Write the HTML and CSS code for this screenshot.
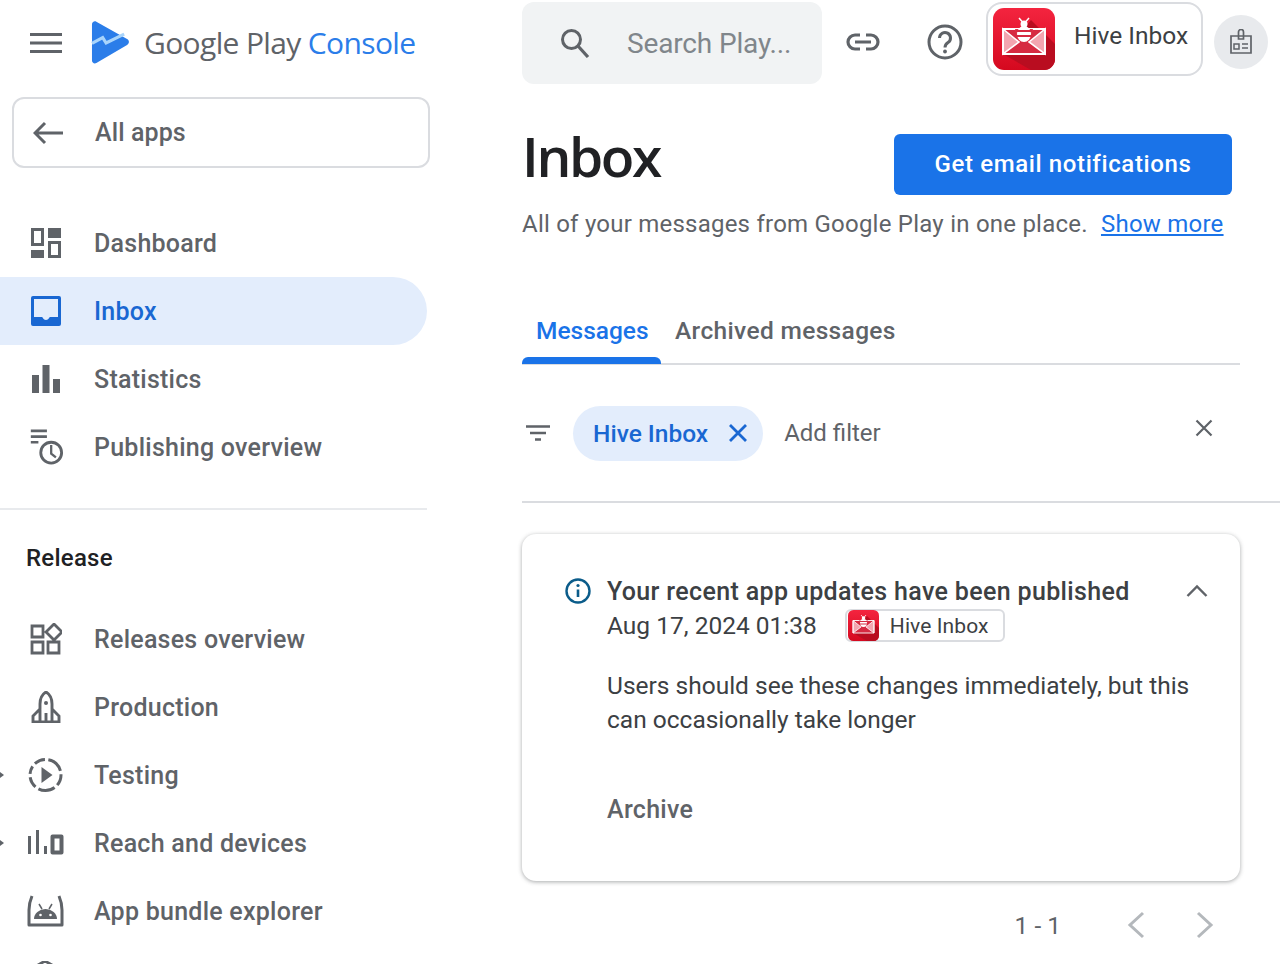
FILE: index.html
```html
<!DOCTYPE html>
<html>
<head>
  <meta charset="utf-8">
  <title>Inbox - Google Play Console</title>
  <link rel="stylesheet" href="styles.css">
</head>
<body>

<svg class="defs" width="0" height="0">
  <defs>
    <linearGradient id="redBg" x1="0" y1="0" x2="0" y2="1">
      <stop offset="0" stop-color="#f4243f"/>
      <stop offset="1" stop-color="#d5091f"/>
    </linearGradient>
    <symbol id="appIcon" viewBox="0 0 62 62">
      <rect width="62" height="62" rx="11" fill="url(#redBg)"/>
      <path d="M38 12L62 36V51a11 11 0 0 1-11 11H38L10 46z" fill="#b90d20"/>
      <path d="M10 21H52V46H10z" fill="#d62a41"/>
      <path d="M10 21L26 34L10 46zM52 21L36 34L52 46z" fill="#f3a5b0" stroke="#fff" stroke-width="1.600"/>
      <path d="M10 21H52V46H10z" fill="none" stroke="#fff" stroke-width="1.800"/>
      <path d="M22 21h18l-3 11q-6 4-12 0z" fill="#e2354b"/>
      <ellipse cx="31" cy="26" rx="7" ry="8" fill="#fff"/>
      <circle cx="31" cy="16" r="3.500" fill="#fff"/>
      <path d="M26 10l3.500 4M36 10l-3.500 4" stroke="#fff" stroke-width="1.500" fill="none"/>
      <path d="M23 23h16M23 28h16" stroke="#d62a41" stroke-width="2"/>
    </symbol>
  </defs>
</svg>

<div class="page">

  <!-- sidebar -->
  <aside class="sidebar">
    <div class="brand">
      <svg class="menu-icon" viewBox="0 0 32 20"><path d="M0 1.500H32M0 10H32M0 18.500H32" stroke="#5f6368" stroke-width="3"/></svg>
      <svg class="play-logo" viewBox="0 0 40 44">
        <path d="M1 3.500C1 1 3.500-.5 5.500.7L37 18.500c2.500 1.500 2.500 4.500 0 6L5.500 43c-2 1.200-4.500-.2-4.500-2.500z" fill="#2b7de9"/>
        <path d="M1 23l11-6 3.500 5.500L34 13.500" fill="none" stroke="#a8d4fb" stroke-width="3.200"/>
      </svg>
      <span class="brand-name">Google Play <span class="brand-blue">Console</span></span>
    </div>

    <a class="all-apps">
      <svg viewBox="0 0 30 24"><path d="M30 12H3M12 2L2 12l10 10" fill="none" stroke="#5f6368" stroke-width="3"/></svg>
      <span>All apps</span>
    </a>

    <nav class="nav nav-top">
      <a class="nav-item">
        <svg viewBox="0 0 32 32"><path d="M1 1h13v18H1zM4 4v12h7V4zM18 1h13v10H18zM1 23h13v8H1zM18 14h13v17H18zM21 17v11h7V17z" fill="#5f6368" fill-rule="evenodd"/></svg>
        Dashboard
      </a>
      <a class="nav-item active">
        <svg viewBox="0 0 32 32"><path d="M3 1h26a2 2 0 0 1 2 2v26a2 2 0 0 1-2 2H3a2 2 0 0 1-2-2V3a2 2 0 0 1 2-2zm1 3v18h8c1 0 1 3 4 3s3-3 4-3h8V4z" fill="#1967d2" fill-rule="evenodd"/></svg>
        Inbox
      </a>
      <a class="nav-item">
        <svg viewBox="0 0 32 32"><path d="M2 12h7v18H2zM12.500 2h7v28h-7zM23 16h7v14h-7z" fill="#5f6368"/></svg>
        Statistics
      </a>
      <a class="nav-item">
        <svg class="tall" viewBox="0 0 37 38"><path d="M3 2h17M3 8h17M3 14h8" stroke="#5f6368" stroke-width="2.800" fill="none"/><circle cx="24.500" cy="25" r="11" fill="#fff" stroke="#5f6368" stroke-width="3"/><path d="M24.500 17v9l5 4" fill="none" stroke="#5f6368" stroke-width="2.400"/></svg>
        Publishing overview
      </a>
    </nav>

    <div class="nav-rule"></div>
    <div class="nav-title">Release</div>

    <nav class="nav">
      <a class="nav-item">
        <svg viewBox="0 0 32 32"><path d="M2 3h11v11H2zM2 19h11v11H2zM18 19h11v11H18zM24 1l8 8-8 8-8-8z" fill="none" stroke="#5f6368" stroke-width="2.800"/></svg>
        Releases overview
      </a>
      <a class="nav-item">
        <svg viewBox="0 0 32 32"><path d="M16 1c5 3 6 8 6 12v5l7 7v6H3v-6l7-7v-5c0-4 1-9 6-12zM10 18v13M22 18v13M16 22v9" fill="none" stroke="#5f6368" stroke-width="2.900"/><circle cx="16" cy="12" r="2" fill="#5f6368"/></svg>
        Production
      </a>
      <a class="nav-item has-arrow">
        <svg class="tall" viewBox="0 0 36 36"><circle cx="18" cy="18" r="15.500" fill="none" stroke="#5f6368" stroke-width="3" stroke-dasharray="11 3.500 17 3.500 11 3.500 8 3.500"/><path d="M14 10l11 8-11 8z" fill="#5f6368"/></svg>
        Testing
      </a>
      <a class="nav-item has-arrow">
        <svg class="tall" viewBox="0 0 37 36"><path d="M1 11h3v18H1zM9 5h3v24H9zM17 21h3v8h-3z" fill="#5f6368"/><path d="M25.500 11.500h9v16h-9z" fill="none" stroke="#5f6368" stroke-width="4" stroke-linejoin="round"/></svg>
        Reach and devices
      </a>
      <a class="nav-item">
        <svg class="tall" viewBox="0 0 37 36"><path d="M5 3Q2 10 2 17V32H35V17Q35 10 32 3" fill="none" stroke="#5f6368" stroke-width="3" stroke-linejoin="round"/><path d="M7 26a11.500 10 0 0 1 23 0z" fill="#5f6368"/><path d="M12 11l3 5M25 11l-3 5" stroke="#5f6368" stroke-width="1.500"/><circle cx="13.500" cy="22" r="1.300" fill="#fff"/><circle cx="23.500" cy="22" r="1.300" fill="#fff"/></svg>
        App bundle explorer
      </a>
      <a class="nav-item">
        <svg class="tall" viewBox="0 0 37 36"><path d="M18 0L4 8l14 8 14-8z" fill="none" stroke="#5f6368" stroke-width="2.800"/></svg>
      </a>
    </nav>
  </aside>

  <!-- main column -->
  <main class="main">
    <header class="topbar">
      <div class="search">
        <svg viewBox="0 0 30 30"><circle cx="11.500" cy="11.500" r="9" fill="none" stroke="#5f6368" stroke-width="3"/><path d="M18 18l10 11" stroke="#5f6368" stroke-width="3.200"/></svg>
        <span>Search Play...</span>
      </div>
      <svg class="link-icon" viewBox="0 0 34 18"><path d="M14 2H9a7 7 0 0 0 0 14h5M20 2h5a7 7 0 0 1 0 14h-5M9 9h16" fill="none" stroke="#5f6368" stroke-width="3.200"/></svg>
      <svg class="help-icon" viewBox="0 0 36 36"><circle cx="18" cy="18" r="16" fill="none" stroke="#5f6368" stroke-width="3"/><path d="M12.500 14a5.500 5.500 0 1 1 8.500 4.600c-2 1.400-3 2.400-3 4.900" fill="none" stroke="#5f6368" stroke-width="3"/><circle cx="18" cy="27.500" r="1.900" fill="#5f6368"/></svg>
      <div class="app-switch">
        <svg class="app-icon"><use href="#appIcon"/></svg>
        <span>Hive Inbox</span>
      </div>
      <div class="avatar">
        <svg viewBox="0 0 24 26"><path d="M2 7h20v17H2zM9.500 7V3a2.500 2.500 0 0 1 5 0v7h-5z" fill="#e8eaed" stroke="#5f6368" stroke-width="1.700"/><path d="M5 15h5v5H5zM13 15h6M13 19h6" stroke="#5f6368" stroke-width="1.500" fill="none"/></svg>
      </div>
    </header>

    <div class="title-row">
      <h1>Inbox</h1>
      <button class="primary">Get email notifications</button>
    </div>
    <p class="subtitle">All of your messages from Google Play in one place. <a>Show more</a></p>

    <div class="tabs">
      <a class="tab active">Messages</a>
      <a class="tab">Archived messages</a>
    </div>

    <div class="filters">
      <svg class="filter-icon" viewBox="0 0 24 16"><path d="M0 1.500H24M4 8H20M9 14.500H15" stroke="#5f6368" stroke-width="2.400"/></svg>
      <div class="chip">
        Hive Inbox
        <svg viewBox="0 0 20 20"><path d="M2 2l16 16M18 2L2 18" stroke="#1967d2" stroke-width="2.800"/></svg>
      </div>
      <span class="add-filter">Add filter</span>
      <svg class="clear-icon" viewBox="0 0 18 18"><path d="M1.500 1.500l15 15M16.500 1.500l-15 15" stroke="#5f6368" stroke-width="2.200"/></svg>
    </div>

    <section class="card">
      <div class="card-head">
        <svg class="info-icon" viewBox="0 0 26 26"><circle cx="13" cy="13" r="11.500" fill="none" stroke="#0b5c8a" stroke-width="2.400"/><path d="M13 11.500v7.500" stroke="#0b5c8a" stroke-width="2.600"/><circle cx="13" cy="7.500" r="1.600" fill="#0b5c8a"/></svg>
        <div class="card-titles">
          <h2>Your recent app updates have been published</h2>
          <div class="card-meta">
            <span>Aug 17, 2024 01:38</span>
            <div class="app-tag">
              <svg class="tag-icon"><use href="#appIcon"/></svg>
              <span>Hive Inbox</span>
            </div>
          </div>
        </div>
        <svg class="chevron" viewBox="0 0 22 14"><path d="M1.500 12L11 2.500 20.500 12" fill="none" stroke="#5f6368" stroke-width="2.400"/></svg>
      </div>
      <p class="card-body">Users should see these changes immediately, but this can occasionally take longer</p>
      <a class="archive">Archive</a>
    </section>

    <div class="pager">
      <span>1 - 1</span>
      <svg viewBox="0 0 18 28"><path d="M16 2L3 14l13 12" fill="none" stroke="#b4b8bc" stroke-width="3"/></svg>
      <svg viewBox="0 0 18 28"><path d="M2 2l13 12L2 26" fill="none" stroke="#b4b8bc" stroke-width="3"/></svg>
    </div>
  </main>
</div>

</body>
</html>
```

FILE: styles.css
```css
/* page frame */
html, body {
  margin: 0;
  height: 964px;
  overflow: hidden;
  background: #fff;
}

body {
  font-family: Roboto, "Liberation Sans", sans-serif;
  color: #3c4043;
}

a {
  display: block;
}

.defs {
  display: block;
  height: 0;
}

.page {
  display: flex;
  height: 964px;
  overflow: hidden;
}

/* sidebar */
.sidebar {
  width: 427px;
  flex: none;
}

.brand {
  display: flex;
  align-items: center;
  height: 86px;
  padding-left: 30px;
}

.menu-icon {
  width: 32px;
  height: 20px;
  margin-right: 29px;
}

.play-logo {
  width: 39px;
  height: 43px;
  margin-top: -2px;
  margin-right: 14px;
}

.brand-name {
  margin-top: -2px;
  font-family: "Open Sans", sans-serif;
  font-size: 30px;
  font-weight: 500;
  letter-spacing: -0.64px;
  color: #5f6368;
  white-space: nowrap;
}

.brand-blue {
  color: #2b7de9;
}

.all-apps {
  display: flex;
  align-items: center;
  box-sizing: border-box;
  width: 418px;
  height: 71px;
  margin: 11px 0 0 12px;
  padding-left: 19px;
  border: 2px solid #dadce0;
  border-radius: 12px;
  font-size: 25px;
  font-weight: 500;
  letter-spacing: 0.1px;
  color: #5f6368;
}

.all-apps svg {
  width: 30px;
  height: 24px;
  margin-right: 32px;
}

.nav-top {
  margin-top: 41px;
}

.nav-item {
  position: relative;
  display: flex;
  align-items: center;
  height: 68px;
  padding-left: 30px;
  font-size: 25px;
  font-weight: 500;
  letter-spacing: 0.25px;
  color: #5f6368;
  white-space: nowrap;
}

.nav-item svg {
  width: 32px;
  height: 32px;
  margin-right: 32px;
}

.nav-item svg.tall {
  width: 37px;
  height: 36px;
  margin-left: -3px;
  margin-right: 30px;
}

.nav-item.active {
  background: #e3edfc;
  color: #1967d2;
  border-radius: 0 34px 34px 0;
}

/* little expander arrow at the sidebar edge */
.nav-item.has-arrow::before {
  content: "";
  position: absolute;
  left: 0;
  top: 31px;
  border-left: 4px solid #5f6368;
  border-top: 3px solid transparent;
  border-bottom: 3px solid transparent;
}

.nav-rule {
  height: 2px;
  margin-top: 27px;
  background: #e8eaed;
}

.nav-title {
  margin: 32px 0 31px 26px;
  font-size: 24px;
  font-weight: 500;
  line-height: 32px;
  letter-spacing: 0.25px;
  color: #202124;
}

/* main column */
.main {
  flex: 1;
  min-width: 0;
  padding-left: 95px;
}

.topbar {
  display: flex;
  align-items: center;
  height: 84px;
}

.search {
  display: flex;
  align-items: center;
  box-sizing: border-box;
  width: 300px;
  height: 82px;
  margin-top: 1px;
  padding-left: 38px;
  background: #f1f3f4;
  border-radius: 12px;
  font-size: 28px;
  color: #80868b;
}

.search span {
  padding-top: 2px;
  letter-spacing: -0.15px;
}

.search svg {
  width: 30px;
  height: 30px;
  margin-right: 37px;
  flex: none;
}

.link-icon {
  width: 34px;
  height: 18px;
  margin-left: 24px;
}

.help-icon {
  width: 36px;
  height: 36px;
  margin-left: 47px;
}

.app-switch {
  display: flex;
  align-items: center;
  box-sizing: border-box;
  width: 217px;
  height: 74px;
  margin-left: 23px;
  margin-top: -6px;
  padding-left: 5px;
  border: 2px solid #dadce0;
  border-radius: 16px;
  font-size: 25px;
  color: #3c4043;
}

.app-switch span {
  margin-bottom: 8px;
  margin-left: -1px;
  font-size: 24.5px;
}

.app-icon {
  width: 62px;
  height: 62px;
  margin-right: 20px;
}

.avatar {
  display: flex;
  align-items: center;
  justify-content: center;
  width: 54px;
  height: 54px;
  margin-left: 11px;
  border-radius: 50%;
  background: #e8eaed;
}

.avatar svg {
  width: 24px;
  height: 26px;
}

.title-row {
  display: flex;
  align-items: flex-start;
  justify-content: space-between;
  width: 710px;
  margin-top: 42px;
}

h1 {
  margin: -2px 0 2px;
  font-family: "Open Sans", sans-serif;
  font-size: 55px;
  font-weight: 600;
  line-height: 64px;
  letter-spacing: -2.4px;
  color: #202124;
}

.primary {
  width: 338px;
  height: 61px;
  margin-top: 8px;
  padding-bottom: 2px;
  border: 0;
  border-radius: 6px;
  background: #1a73e8;
  color: #fff;
  font-family: Roboto, sans-serif;
  font-size: 24px;
  font-weight: 500;
  letter-spacing: 0.62px;
}

.subtitle {
  margin: 11px 0 0;
  font-size: 24px;
  line-height: 36px;
  letter-spacing: 0.23px;
  color: #5f6368;
}

.subtitle a {
  display: inline;
  margin-left: 7px;
  color: #1a73e8;
  text-decoration: underline;
}

.tabs {
  display: flex;
  width: 718px;
  height: 78px;
  margin-top: 45px;
  border-bottom: 2px solid #dadce0;
  box-sizing: border-box;
}

.tab {
  position: relative;
  padding: 29px 14px 0;
  font-size: 24.5px;
  font-weight: 500;
  letter-spacing: 0.35px;
  color: #5f6368;
}

.tab.active {
  width: 111px;
  letter-spacing: 0;
  color: #1a73e8;
}

.tab.active::after {
  content: "";
  position: absolute;
  left: 0;
  right: 0;
  bottom: -1px;
  height: 7px;
  background: #1a73e8;
  border-radius: 6px 6px 0 0;
}

.filters {
  display: flex;
  align-items: center;
  height: 138px;
  border-bottom: 2px solid #dadce0;
  box-sizing: border-box;
  position: relative;
}

.filter-icon {
  width: 24px;
  height: 16px;
  margin-left: 4px;
  margin-right: 23px;
}

.chip {
  display: flex;
  align-items: center;
  gap: 20px;
  height: 55px;
  padding: 0 15px 0 20px;
  border-radius: 28px;
  background: #e3edfc;
  color: #1967d2;
  font-size: 24.5px;
  font-weight: 500;
}

.chip svg {
  width: 20px;
  height: 20px;
}

.add-filter {
  margin-left: 21px;
  font-size: 24px;
  color: #5f6368;
}

.clear-icon {
  width: 18px;
  height: 18px;
  margin-left: 314px;
  margin-top: -10px;
}

.card {
  box-sizing: border-box;
  width: 718px;
  height: 347px;
  margin-top: 31px;
  padding: 39px 32px 0 43px;
  border-radius: 14px;
  box-shadow: 0 1px 4px rgba(60, 64, 67, 0.45);
}

.card-head {
  display: flex;
  align-items: flex-start;
}

.info-icon {
  width: 26px;
  height: 26px;
  flex: none;
  margin-top: 5px;
  margin-right: 16px;
}

.card-titles {
  flex: 1;
}

h2 {
  margin: 1px 0 -1px;
  font-size: 25px;
  font-weight: 500;
  line-height: 36px;
  letter-spacing: 0.35px;
  color: #3c4043;
}

.card-meta {
  display: flex;
  align-items: center;
  height: 33px;
  font-size: 24.5px;
  color: #3c4043;
}

.app-tag {
  display: flex;
  align-items: center;
  box-sizing: border-box;
  width: 160px;
  height: 33px;
  margin-left: 28px;
  padding-left: 1px;
  border: 2px solid #dadce0;
  border-radius: 6px;
  font-size: 21px;
  letter-spacing: 0.1px;
  color: #3c4043;
}

.tag-icon {
  width: 31px;
  height: 31px;
  margin-right: 11px;
}

.chevron {
  width: 22px;
  height: 14px;
  margin-top: 11px;
}

.card-body {
  width: 600px;
  margin: 27px 0 0 42px;
  font-size: 24.5px;
  line-height: 34px;
  color: #3c4043;
}

.archive {
  margin: 58px 0 0 42px;
  font-size: 25px;
  font-weight: 500;
  letter-spacing: 0.3px;
  color: #5f6368;
}

.pager {
  display: flex;
  align-items: center;
  width: 718px;
  height: 28px;
  margin-top: 30px;
  justify-content: flex-end;
  font-size: 24.5px;
  color: #5f6368;
}

.pager span {
  margin-right: 66px;
}

.pager svg {
  width: 18px;
  height: 28px;
  margin-right: 26px;
}

.pager svg:last-child {
  margin-left: 25px;
}
```
